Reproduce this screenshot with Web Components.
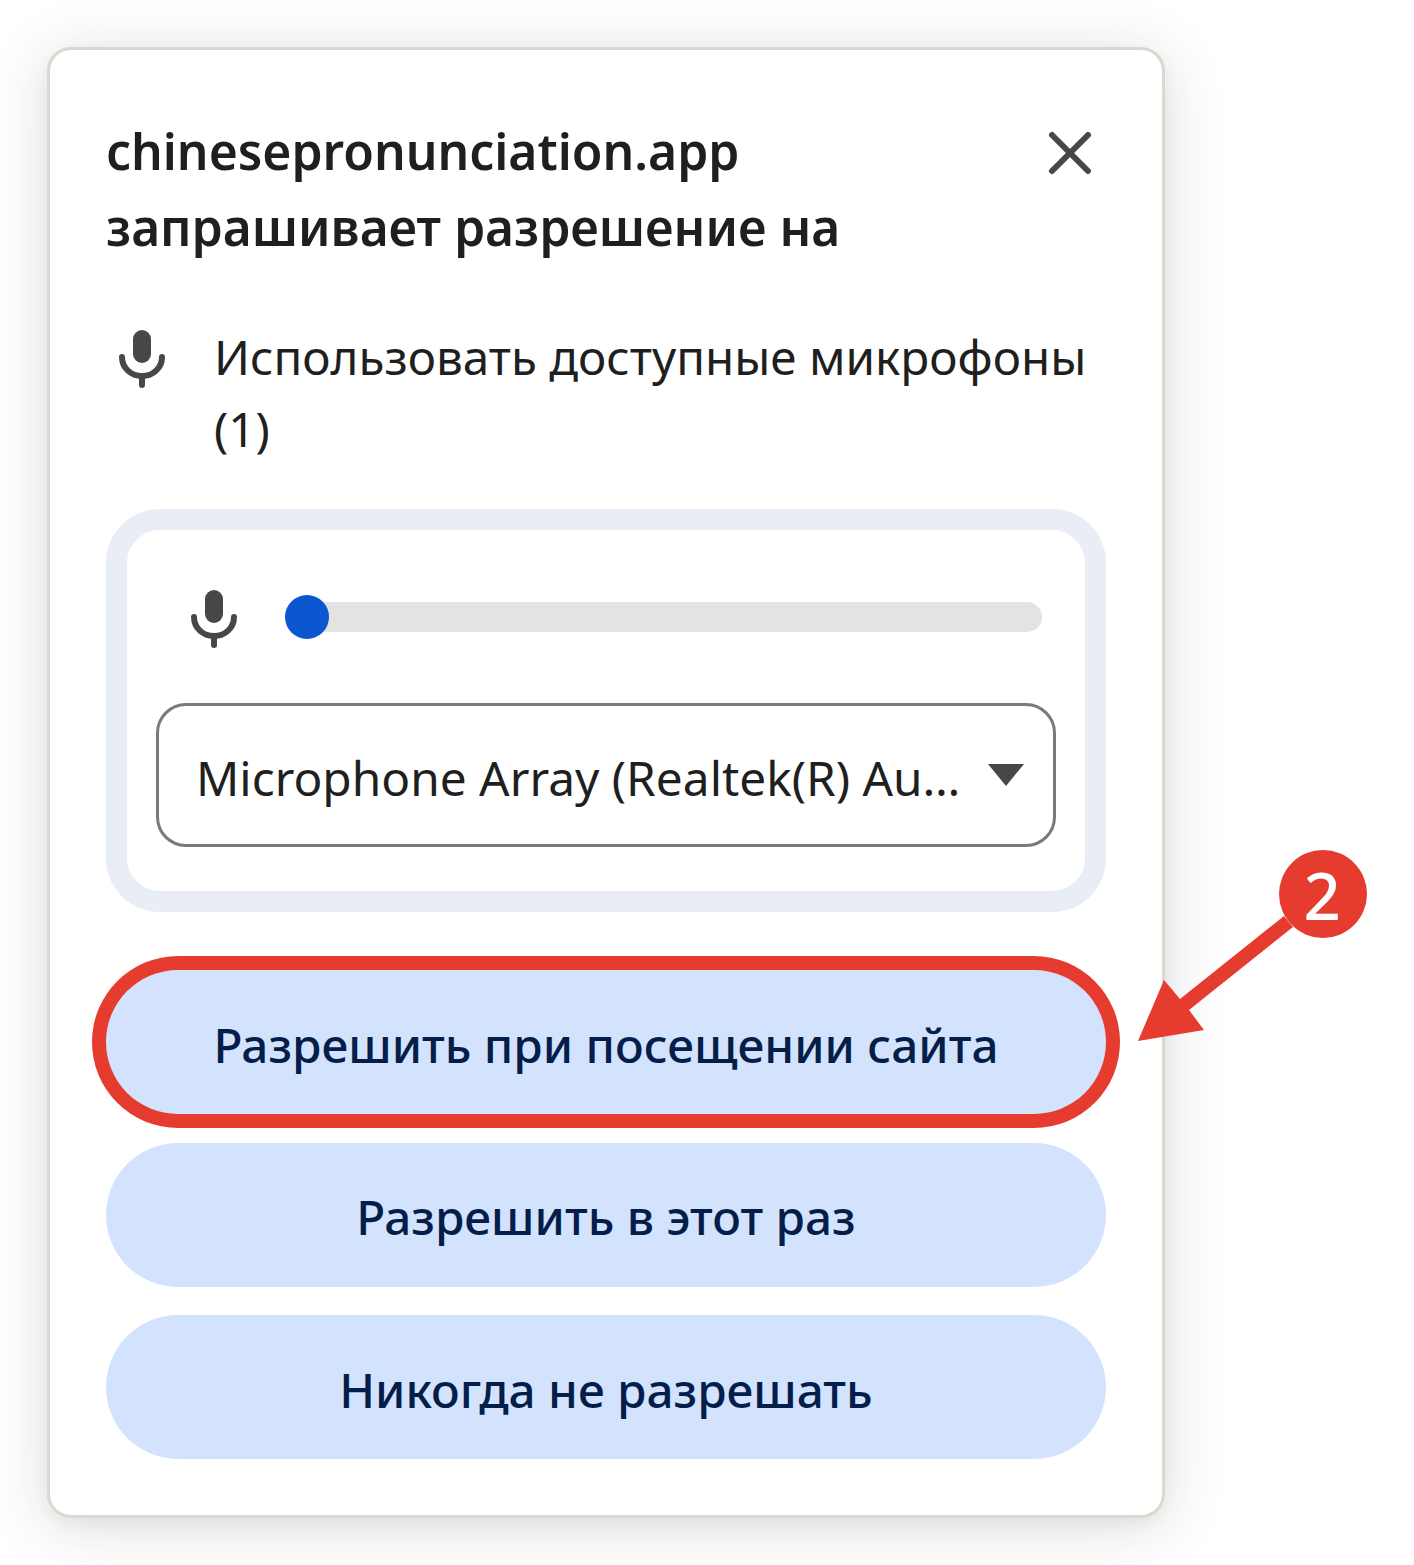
<!DOCTYPE html>
<html lang="ru">
<head>
<meta charset="utf-8">
<title>Permission prompt</title>
<style>
html, body { margin: 0; background: #fff; }
body { font-family: "Noto Sans", "Liberation Sans", sans-serif; color: #1f1f1f; height: 1565px; overflow: hidden; }
</style>
</head>
<body>
<permission-prompt>
  <span slot="site">chinesepronunciation.app</span>
  <span slot="ask">запрашивает разрешение на</span>
  <span slot="what">Использовать доступные микрофоны (1)</span>
  <device-box slot="device" label="Microphone Array (Realtek(R) Au…"></device-box>
  <prompt-button slot="actions" marked>Разрешить при посещении сайта</prompt-button>
  <prompt-button slot="actions">Разрешить в этот раз</prompt-button>
  <prompt-button slot="actions">Никогда не разрешать</prompt-button>
</permission-prompt>
<step-arrow number="2"></step-arrow>

<script>
class micIcon extends HTMLElement{
    constructor(){
        super();
        this.attachShadow({mode: "open"});
        this.shadowRoot.innerHTML = `
        <style>
        :host{ display: block; width: 48px; height: 60px; flex: none; }
        svg{ display: block; }
        </style>
        <svg width="48" height="60" viewBox="0 0 48 60" fill="none">
            <rect x="15" y="1" width="18" height="33" rx="9" fill="#474747"/>
            <path d="M4 28c0 11 9 19 20 19s20-8 20-19" stroke="#474747" stroke-width="6" stroke-linecap="round"/>
            <path d="M24 47v9" stroke="#474747" stroke-width="6" stroke-linecap="round"/>
        </svg>`;
    }
}
customElements.define("mic-icon", micIcon);

class promptButton extends HTMLElement{
    constructor(){
        super();
        this.attachShadow({mode: "open"});
        this.shadowRoot.innerHTML = `
        <style>
        :host{
            display: flex;
            box-sizing: border-box;
            align-items: center;
            justify-content: center;
            height: 144px;
            padding-top: 4px;
            border-radius: 72px;
            background: #d3e3fd;
            color: #041e49;
            font-size: 47.7px;
            font-weight: 500;
        }
        :host([marked]){ box-shadow: 0 0 0 14px #e63c2f; }
        </style>
        <slot></slot>`;
    }
}
customElements.define("prompt-button", promptButton);

class deviceBox extends HTMLElement{
    constructor(){
        super();
        this.attachShadow({mode: "open"});
        this.shadowRoot.innerHTML = `
        <style>
        :host{
            display: block;
            box-sizing: border-box;
            height: 403px;
            border: 21px solid #e8edf6;
            border-radius: 54px;
            padding: 59px 29px 0;
        }
        .level{
            display: flex;
            align-items: center;
            gap: 47px;
            padding: 0 14px 0 34px;
            height: 56px;
        }
        .level mic-icon{ margin-top: 4px; }
        .track{
            flex: 1;
            height: 30px;
            border-radius: 15px;
            background: #e3e3e3;
            position: relative;
        }
        .thumb{
            position: absolute;
            left: 0;
            top: -7px;
            width: 44px;
            height: 44px;
            border-radius: 50%;
            background: #0b57d0;
        }
        .select{
            box-sizing: border-box;
            height: 144px;
            margin-top: 58px;
            border: 3px solid #7a7a7a;
            border-radius: 30px;
            display: flex;
            align-items: center;
            padding: 0 29px 0 37px;
            font-size: 47.8px;
            color: #1f1f1f;
            white-space: nowrap;
        }
        .label{ flex: 1; padding-top: 4px; }
        .arrow{
            flex: none;
            width: 0;
            height: 0;
            border-left: 18px solid transparent;
            border-right: 18px solid transparent;
            border-top: 22px solid #474747;
        }
        </style>
        <div class="level">
            <mic-icon></mic-icon>
            <div class="track"><div class="thumb"></div></div>
        </div>
        <div class="select"><span class="label"></span><span class="arrow"></span></div>`;
    }
    connectedCallback(){
        this.shadowRoot.querySelector(".label").textContent = this.getAttribute("label");
    }
}
customElements.define("device-box", deviceBox);

class permissionPrompt extends HTMLElement{
    constructor(){
        super();
        this.attachShadow({mode: "open"});
        this.shadowRoot.innerHTML = `
        <style>
        :host{
            display: block;
            box-sizing: border-box;
            width: 1118px;
            height: 1471px;
            margin: 47px 0 0 47px;
            padding: 63px 56px 0 56px;
            background: #fff;
            border: 3px solid #dcd8d0;
            border-radius: 24px;
            box-shadow: 0 8px 60px rgba(60, 50, 40, .17), 0 6px 14px rgba(60, 50, 40, .05);
        }
        .head{
            display: flex;
            justify-content: space-between;
            align-items: flex-start;
            font-size: 49.8px;
            font-weight: 600;
            line-height: 76px;
            height: 154px;
        }
        .close{ margin: 18px 14px 0 0; flex: none; display: block; }
        .what{
            display: flex;
            gap: 48px;
            margin-top: 48px;
            padding-left: 12px;
            font-size: 47.6px;
            line-height: 72px;
            height: 144px;
        }
        .what mic-icon{ margin-top: 14px; }
        .what div{ flex: 1; padding-top: 6px; }
        .device{ margin-top: 50px; display: block; }
        .actions{
            display: flex;
            flex-direction: column;
            gap: 28.5px;
            margin-top: 58px;
        }
        </style>
        <div class="head">
            <div><slot name="site"></slot><br><slot name="ask"></slot></div>
            <svg class="close" width="44" height="44" viewBox="0 0 44 44" fill="none">
                <path d="M4 4l36 36M40 4L4 40" stroke="#474747" stroke-width="6" stroke-linecap="round"/>
            </svg>
        </div>
        <div class="what"><mic-icon></mic-icon><div><slot name="what"></slot></div></div>
        <div class="device"><slot name="device"></slot></div>
        <div class="actions"><slot name="actions"></slot></div>`;
    }
}
customElements.define("permission-prompt", permissionPrompt);

class stepArrow extends HTMLElement{
    constructor(){
        super();
        this.attachShadow({mode: "open"});
        this.shadowRoot.innerHTML = `
        <style>
        :host{ position: absolute; left: 1130px; top: 845px; width: 245px; height: 205px; display: block; }
        svg{ position: absolute; left: 0; top: 0; }
        .num{
            position: absolute;
            left: 148px;
            top: 6px;
            width: 88px;
            height: 88px;
            display: flex;
            align-items: center;
            justify-content: center;
            color: #fff;
            font-size: 65px;
            font-weight: 500;
        }
        </style>
        <svg width="245" height="205" viewBox="1130 845 245 205">
            <circle cx="1323" cy="894" r="44" fill="#e63c2f"/>
            <path d="M1284 916L1293 927L1189 1010L1204 1030L1138 1041L1164 980L1180 999Z" fill="#e63c2f"/>
        </svg>
        <div class="num"></div>`;
    }
    connectedCallback(){
        this.shadowRoot.querySelector(".num").textContent = this.getAttribute("number");
    }
}
customElements.define("step-arrow", stepArrow);
</script>
</body>
</html>
